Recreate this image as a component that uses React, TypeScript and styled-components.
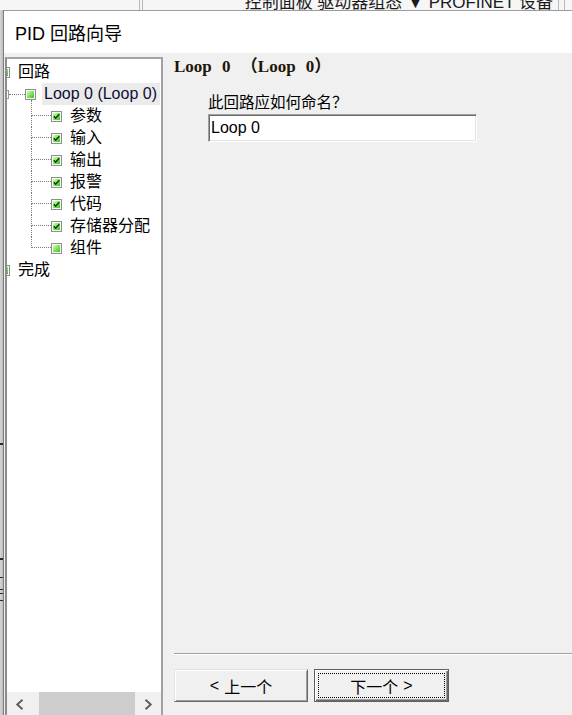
import React from "react";
import styled, { createGlobalStyle } from "styled-components";

const GlobalStyle = createGlobalStyle`
  html, body {
    margin: 0;
    padding: 0;
    background: #f0f0f0;
  }
  body {
    font-family: "Liberation Sans", "Noto Sans CJK SC", sans-serif;
    color: #000;
  }
  * { box-sizing: border-box; }
`;

const Screen = styled.div`
  width: 572px;
  height: 715px;
  overflow: hidden;
  display: flex;
  flex-direction: column;
  background: #f0f0f0;
`;

/* the app behind the dialog, mostly hidden */
const BackStrip = styled.div`
  height: 10px;
  flex: none;
  display: flex;
  overflow: hidden;
  background: #f6f6f6;
`;

const BackCell = styled.div<{ $w: number; $gap?: number; $left?: boolean }>`
  width: ${(p) => p.$w}px;
  flex: none;
  margin-left: ${(p) => p.$gap ?? 0}px;
  border-right: 1px solid #b9b9b9;
  border-left: ${(p) => (p.$left ? "1px solid #b9b9b9" : "none")};
  display: flex;
  justify-content: flex-end;
  padding-right: 5px;
`;

const BackText = styled.span`
  font-size: 17px;
  line-height: 17px;
  margin-top: -6px;
  white-space: nowrap;
  color: #1a1a1a;
`;

const Main = styled.div`
  flex: 1;
  display: flex;
  min-height: 0;
`;

const BackSliver = styled.div`
  width: 3px;
  flex: none;
  background:
    linear-gradient(#2a2a2a, #2a2a2a) 0 433px / 3px 2px no-repeat,
    linear-gradient(#2a2a2a, #2a2a2a) 0 548px / 3px 2px no-repeat,
    linear-gradient(#2a2a2a, #2a2a2a) 0 567px / 3px 1px no-repeat,
    linear-gradient(#2a2a2a, #2a2a2a) 0 579px / 3px 1px no-repeat,
    linear-gradient(#2a2a2a, #2a2a2a) 0 583px / 3px 1px no-repeat,
    linear-gradient(#2a2a2a, #2a2a2a) 0 590px / 3px 1px no-repeat,
    linear-gradient(90deg, #d6d6d6, #bdbdbd);
`;

const Window = styled.div`
  flex: 1;
  min-width: 0;
  display: flex;
  flex-direction: column;
  border-left: 1px solid #7c7c7c;
  border-top: 1px solid #9c9c9c;
  background: #f0f0f0;
`;

const TitleBar = styled.div`
  height: 42px;
  flex: none;
  display: flex;
  align-items: center;
  padding-left: 11px;
  background: #fff;
  font-size: 18px;
  color: #000;
`;

const Body = styled.div`
  flex: 1;
  min-height: 0;
  display: flex;
  gap: 11px;
  padding: 4px 0 0 1px;
`;

/* ---------- tree ---------- */

const TreeBox = styled.div`
  width: 158px;
  flex: none;
  display: flex;
  flex-direction: column;
  background: #fff;
  border: 2px solid;
  border-color: #a3a3a3 #a0a0a0 transparent #8c8c8c;
  border-bottom: none;
`;

const TreeViewport = styled.div`
  flex: 1;
  overflow: hidden;
  padding-top: 2px;
`;

const TreeContent = styled.div`
  margin-left: -8px;
  display: flex;
  flex-direction: column;
`;

const Row = styled.div`
  height: 22px;
  display: flex;
  align-items: center;
  white-space: nowrap;
  font-size: 16px;
`;

const Label = styled.span<{ $selected?: boolean }>`
  margin-left: 6px;
  padding: 0 ${(p) => (p.$selected ? 3 : 2)}px 0 2px;
  height: 22px;
  line-height: 22px;
  background: ${(p) => (p.$selected ? "#ebebeb" : "transparent")};
  color: ${(p) => (p.$selected ? "#0d0d33" : "#000")};
`;

const Expander = styled.span`
  width: 9px;
  height: 9px;
  flex: none;
  margin-left: 1px;
  border: 1px solid #9a9a9a;
  background: #fff;
`;

const HLine = styled.span<{ $w: number }>`
  width: ${(p) => p.$w}px;
  flex: none;
  border-top: 1px dotted #7a7a7a;
`;

const Indent = styled.span<{ $w: number }>`
  width: ${(p) => p.$w}px;
  flex: none;
`;

const Elbow = styled.span`
  width: 20px;
  height: 22px;
  flex: none;
  display: flex;
  flex-direction: column;
`;

const ElbowTop = styled.span<{ $first?: boolean }>`
  height: ${(p) => (p.$first ? 16 : 11)}px;
  margin-top: ${(p) => (p.$first ? -5 : 0)}px;
  flex: none;
  border-left: 1px dotted #7a7a7a;
  border-bottom: 1px dotted #7a7a7a;
`;

const ElbowBottom = styled.span<{ $last?: boolean }>`
  flex: 1;
  border-left: 1px dotted ${(p) => (p.$last ? "transparent" : "#7a7a7a")};
`;

const NodeIcon = ({ checked }: { checked?: boolean }) => (
  <svg width="11" height="11" viewBox="0 0 11 11" style={{ flex: "none" }}>
    <defs>
      <linearGradient id="nodeFill" x1="0" y1="0" x2="1" y2="1">
        <stop offset="0" stopColor="#dcf9cc" />
        <stop offset="0.45" stopColor="#8be66a" />
        <stop offset="1" stopColor="#3fbf22" />
      </linearGradient>
    </defs>
    <rect x="0.5" y="0.5" width="10" height="10" fill="#f4fff0" stroke="#8f8f8f" />
    <rect x="2" y="2" width="7" height="7" fill="url(#nodeFill)" />
    {checked && (
      <path d="M2.8 5.3 L4.6 7.2 L8.3 3.3" stroke="#0b3a0b" strokeWidth="1.5" fill="none" />
    )}
  </svg>
);

const HScroll = styled.div`
  height: 23px;
  flex: none;
  display: flex;
  background: #f0f0f0;
`;

const ScrollButton = styled.div<{ $w: number }>`
  width: ${(p) => p.$w}px;
  flex: none;
  display: flex;
  justify-content: center;
  padding-top: 7px;
`;

const ScrollTrack = styled.div`
  flex: 1;
  display: flex;
  padding-left: 7px;
`;

const ScrollThumb = styled.div`
  flex: 1;
  background: #cdcdcd;
`;

const Chevron = ({ dir }: { dir: "left" | "right" }) => (
  <svg width="9" height="11" viewBox="0 0 9 11">
    <path
      d={dir === "left" ? "M7.5 0.8 L2.3 5.5 L7.5 10.2" : "M1.5 0.8 L6.7 5.5 L1.5 10.2"}
      stroke="#606060"
      strokeWidth="2"
      fill="none"
    />
  </svg>
);

/* ---------- page content ---------- */

const Content = styled.div`
  flex: 1;
  min-width: 0;
  display: flex;
  flex-direction: column;
  padding-bottom: 13px;
`;

const PageTitle = styled.div`
  height: 20px;
  line-height: 20px;
  font-family: "Liberation Serif", "Noto Sans CJK SC", serif;
  font-weight: bold;
  font-size: 17px;
  word-spacing: 6px;
  color: #1e1608;
  white-space: nowrap;
`;

const Question = styled.div`
  margin: 15px 0 0 34px;
  height: 22px;
  line-height: 22px;
  font-size: 15.5px;
  white-space: nowrap;
`;

const NameInput = styled.input`
  margin-left: 34px;
  width: 269px;
  height: 28px;
  padding: 0 0 0 2px;
  border: 1px solid;
  border-color: #a0a0a0 #ffffff #ffffff #a0a0a0;
  box-shadow: inset 1px 1px 0 #6a6a6a, inset -1px -1px 0 #e3e3e3;
  background: #fff;
  font-family: "Liberation Sans", sans-serif;
  font-size: 16px;
  color: #000;
  outline: none;
`;

const Separator = styled.div`
  margin-top: auto;
  border-top: 1px solid #a0a0a0;
  border-bottom: 1px solid #fff;
`;

const ButtonRow = styled.div`
  margin-top: 14px;
  display: flex;
  gap: 6px;
`;

const WizardButton = styled.button<{ $default?: boolean }>`
  width: ${(p) => (p.$default ? 135 : 134)}px;
  height: 33px;
  padding: ${(p) => (p.$default ? "3px" : "0")};
  display: flex;
  font-family: "Liberation Sans", "Noto Sans CJK SC", sans-serif;
  font-size: 16px;
  color: #000;
  background: #f0f0f0;
  border: 1px solid;
  border-color: ${(p) =>
    p.$default ? "#5f5f5f" : "#e3e3e3 #696969 #696969 #e3e3e3"};
  box-shadow: ${(p) =>
    p.$default
      ? "inset 1px 1px 0 #fff, inset -1px -1px 0 #696969, inset -2px -2px 0 #a0a0a0"
      : "inset 1px 1px 0 #fff, inset -1px -1px 0 #a0a0a0"};
`;

const ButtonFace = styled.span<{ $focused?: boolean }>`
  flex: 1;
  display: flex;
  align-items: center;
  justify-content: center;
  gap: 5px;
  border: 1px dotted ${(p) => (p.$focused ? "#000" : "transparent")};
`;

const tasks = [
  { text: "参数", checked: true },
  { text: "输入", checked: true },
  { text: "输出", checked: true },
  { text: "报警", checked: true },
  { text: "代码", checked: true },
  { text: "存储器分配", checked: true },
  { text: "组件", checked: false },
];

export default function App() {
  return (
    <Screen>
      <GlobalStyle />
      <BackStrip>
        <BackCell $w={140} />
        <BackCell $w={417} $gap={2} $left>
          <BackText>控制面板 驱动器组态 ▼ PROFINET 设备</BackText>
        </BackCell>
        <BackCell $w={5} />
      </BackStrip>
      <Main>
        <BackSliver />
        <Window>
          <TitleBar>PID 回路向导</TitleBar>
          <Body>
            <TreeBox>
              <TreeViewport>
                <TreeContent>
                  <Row>
                    <NodeIcon />
                    <Label>回路</Label>
                  </Row>
                  <Row>
                    <Expander />
                    <HLine $w={16} />
                    <NodeIcon />
                    <Label $selected>Loop 0 (Loop 0)</Label>
                  </Row>
                  {tasks.map((t, i) => (
                    <Row key={t.text}>
                      <Indent $w={32} />
                      <Elbow>
                        <ElbowTop $first={i === 0} />
                        <ElbowBottom $last={i === tasks.length - 1} />
                      </Elbow>
                      <NodeIcon checked={t.checked} />
                      <Label>{t.text}</Label>
                    </Row>
                  ))}
                  <Row>
                    <NodeIcon />
                    <Label>完成</Label>
                  </Row>
                </TreeContent>
              </TreeViewport>
              <HScroll>
                <ScrollButton $w={25}>
                  <Chevron dir="left" />
                </ScrollButton>
                <ScrollTrack>
                  <ScrollThumb />
                </ScrollTrack>
                <ScrollButton $w={26}>
                  <Chevron dir="right" />
                </ScrollButton>
              </HScroll>
            </TreeBox>
            <Content>
              <PageTitle>Loop 0 （Loop 0）</PageTitle>
              <Question>此回路应如何命名？</Question>
              <NameInput defaultValue="Loop 0" />
              <Separator />
              <ButtonRow>
                <WizardButton>
                  <ButtonFace>
                    <span>&lt;</span>
                    <span>上一个</span>
                  </ButtonFace>
                </WizardButton>
                <WizardButton $default>
                  <ButtonFace $focused>
                    <span>下一个</span>
                    <span>&gt;</span>
                  </ButtonFace>
                </WizardButton>
              </ButtonRow>
            </Content>
          </Body>
        </Window>
      </Main>
    </Screen>
  );
}
